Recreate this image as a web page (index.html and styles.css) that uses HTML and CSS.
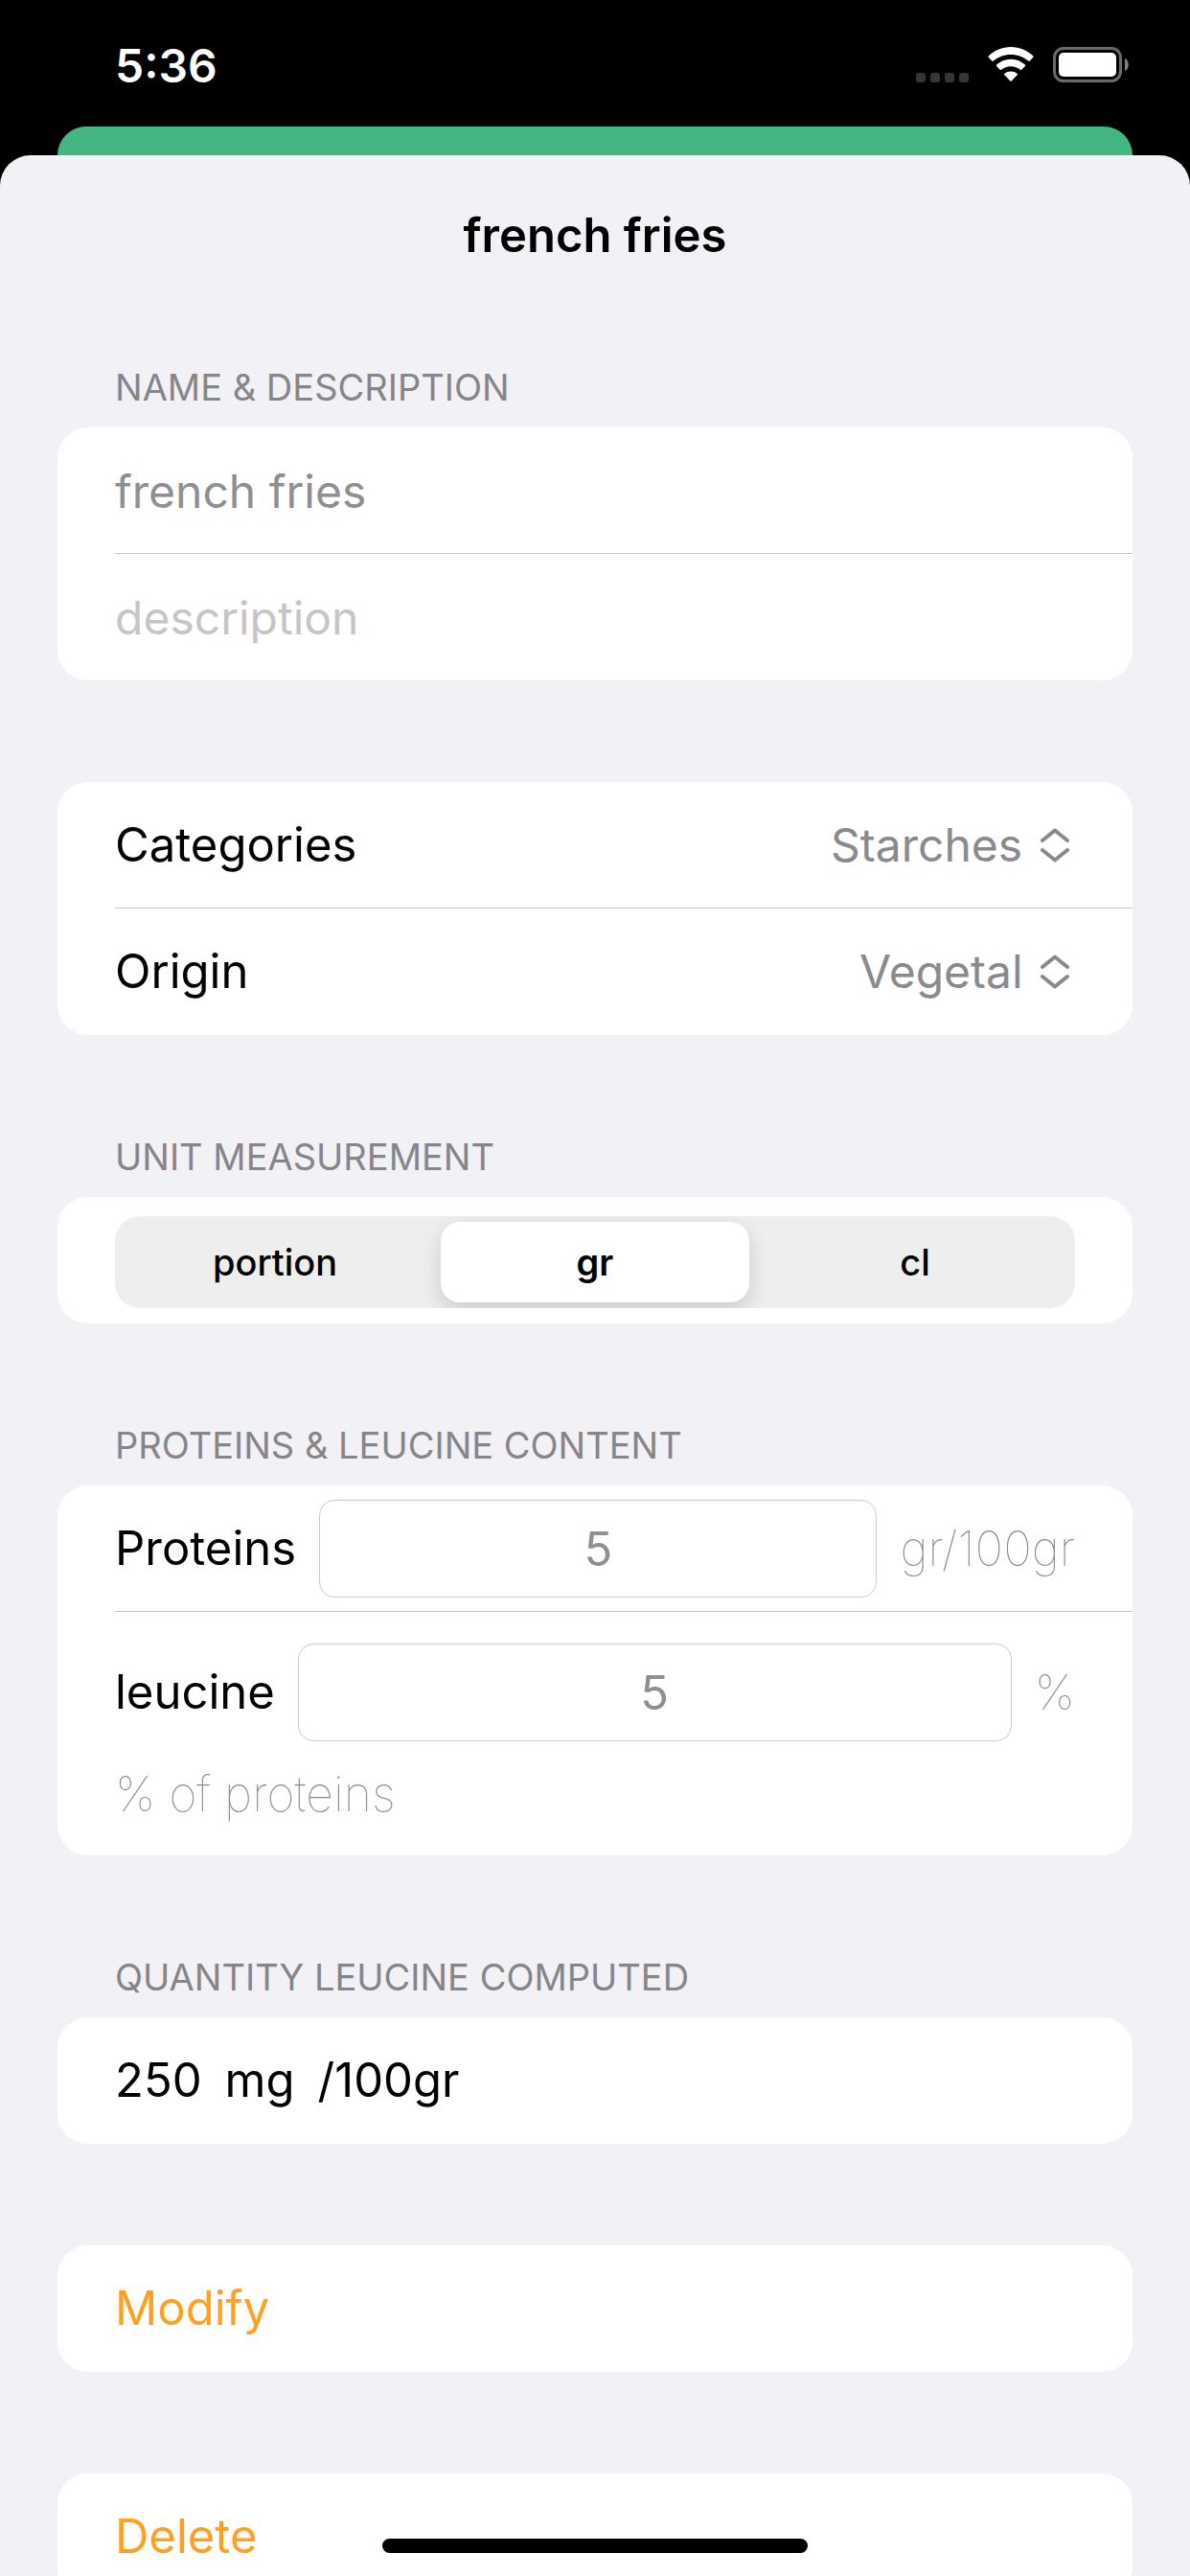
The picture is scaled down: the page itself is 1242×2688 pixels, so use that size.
FILE: index.html
```html
<!DOCTYPE html>
<html lang="en">
  <head>
    <meta charset="utf-8">
    <meta name="viewport" content="width=device-width, initial-scale=1">
    <title>french fries</title>
    <link rel="stylesheet" href="styles.css">
  </head>
  <body>
    <div class="status-bar">
      <div class="time">5:36</div>
      <div class="status-icons">
        <svg class="dots" width="55" height="10" viewBox="0 0 55 10" fill="#363636">
          <rect x="0" width="10" height="10" rx="3"/>
          <rect x="15" width="10" height="10" rx="3"/>
          <rect x="30" width="10" height="10" rx="3"/>
          <rect x="45" width="10" height="10" rx="3"/>
        </svg>
        <svg class="wifi" width="48" height="37" viewBox="0 0 48 37" fill="#fff">
          <path d="M24 0C33 0 41 3.500 47.300 9.400Q48 10.100 47.300 10.800L43.800 14.600Q43.100 15.300 42.300 14.600C37.300 10.300 31 7.900 24 7.900S10.700 10.300 5.700 14.600Q4.900 15.300 4.200 14.600L.7 10.800Q0 10.100 .7 9.400C7 3.500 15 0 24 0Z"/>
          <path d="M24 12.700C29.800 12.700 35 14.900 38.900 18.500Q39.600 19.200 38.900 19.900L35.300 23.700Q34.600 24.400 33.800 23.700C31.100 21.500 27.800 20.200 24 20.200S16.900 21.500 14.200 23.700Q13.400 24.400 12.700 23.700L9.100 19.900Q8.400 19.200 9.100 18.500C13 14.900 18.200 12.700 24 12.700Z"/>
          <path d="M24 25.400C26.500 25.400 28.700 26.200 30.500 27.700Q31.300 28.400 30.600 29.200L24.700 35.500Q24 36.200 23.300 35.500L17.400 29.200Q16.700 28.400 17.500 27.700C19.300 26.200 21.500 25.400 24 25.400Z"/>
        </svg>
        <svg class="battery" width="79" height="37" viewBox="0 0 79 37">
          <rect x="1.500" y="1.500" width="69" height="34" rx="9.500" fill="none" stroke="#6b6b6b" stroke-width="3"/>
          <rect x="6" y="6" width="60" height="25" rx="5" fill="#fff"/>
          <path d="M75 12c5 2 5 11 0 13z" fill="#808080"/>
        </svg>
      </div>
    </div>

    <div class="back-page"></div>

    <div class="sheet">
      <h1 class="title">french fries</h1>
      <form class="food-form">
        <section class="section">
          <h2 class="section-title">NAME &amp; DESCRIPTION</h2>
          <div class="card">
            <div class="row">
              <input class="text-input" type="text" aria-label="Name" value="french fries">
            </div>
            <div class="row">
              <input class="text-input" type="text" aria-label="Description" placeholder="description">
            </div>
          </div>
        </section>

        <section class="section">
          <div class="card">
            <div class="row">
              <label for="categories">Categories</label>
              <div class="picker">
                <select id="categories">
                  <option>Starches</option>
                </select>
                <svg class="chevrons" width="30" height="36" viewBox="0 0 30 36" fill="none" stroke="#8a8a8e" stroke-width="4" stroke-linecap="round" stroke-linejoin="round">
                  <path d="M2 13L15 2.500L28 13M2 23L15 33.500L28 23"/>
                </svg>
              </div>
            </div>
            <div class="row">
              <label for="origin">Origin</label>
              <div class="picker">
                <select id="origin">
                  <option>Vegetal</option>
                </select>
                <svg class="chevrons" width="30" height="36" viewBox="0 0 30 36" fill="none" stroke="#8a8a8e" stroke-width="4" stroke-linecap="round" stroke-linejoin="round">
                  <path d="M2 13L15 2.500L28 13M2 23L15 33.500L28 23"/>
                </svg>
              </div>
            </div>
          </div>
        </section>

        <section class="section">
          <h2 class="section-title">UNIT MEASUREMENT</h2>
          <div class="card">
            <div class="row">
              <div class="segments" role="radiogroup" aria-label="Unit measurement">
                <label class="segment"><input type="radio" name="unit" value="portion">portion</label>
                <label class="segment"><input type="radio" name="unit" value="gr" checked>gr</label>
                <label class="segment"><input type="radio" name="unit" value="cl">cl</label>
              </div>
            </div>
          </div>
        </section>

        <section class="section">
          <h2 class="section-title">PROTEINS &amp; LEUCINE CONTENT</h2>
          <div class="card">
            <div class="row">
              <label for="proteins">Proteins</label>
              <input class="number-input" id="proteins" type="text" inputmode="decimal" value="5">
              <span class="unit">gr/100gr</span>
            </div>
            <div class="row leucine-row">
              <div class="line">
                <label for="leucine">leucine</label>
                <input class="number-input" id="leucine" type="text" inputmode="decimal" value="5">
                <span class="unit">%</span>
              </div>
              <div class="unit">% of proteins</div>
            </div>
          </div>
        </section>

        <section class="section">
          <h2 class="section-title">QUANTITY LEUCINE COMPUTED</h2>
          <div class="card">
            <div class="row">
              <span>250</span>
              <span>mg</span>
              <span>/100gr</span>
            </div>
          </div>
        </section>

        <section class="section">
          <div class="card">
            <button class="row action" type="button">Modify</button>
          </div>
        </section>

        <section class="section">
          <div class="card">
            <button class="row action" type="button">Delete</button>
          </div>
        </section>
      </form>
    </div>

    <div class="home-indicator"></div>
  </body>
</html>
```

FILE: styles.css
```css
* {
  box-sizing: border-box;
}
body {
  margin: 0;
  height: 100vh;
  display: flex;
  flex-direction: column;
  overflow: hidden;
  background-color: #000;
  color: #000;
  font-family: Inter, "Liberation Sans", sans-serif;
  font-size: 49px;
  line-height: 62px;
}
input, select, button {
  font: inherit;
  color: inherit;
  background: none;
  border: none;
  margin: 0;
  padding: 0;
  border-radius: 0;
  outline: none;
}

/* status bar */
.status-bar {
  flex: none;
  height: 132px;
  padding: 38px 64px 0 120px;
  display: flex;
  justify-content: space-between;
  align-items: flex-start;
  color: #fff;
}
.time {
  font-size: 48px;
  font-weight: 600;
}
.status-icons {
  display: flex;
  align-items: flex-end;
  gap: 20px;
  padding-top: 11px;
}

/* sheet */
.back-page {
  flex: none;
  height: 30px;
  margin: 0 60px;
  background-color: #42b781;
  border-radius: 30px 30px 0 0;
}
.sheet {
  flex: 1;
  min-height: 0;
  overflow-y: auto;
  scrollbar-width: none;
  background-color: #f2f1f6;
  border-radius: 32px 32px 0 0;
}
.title {
  margin: 0;
  padding: 53px 60px;
  font-size: 49px;
  font-weight: 600;
  text-align: center;
}
.food-form {
  padding: 53px 60px;
  display: flex;
  flex-direction: column;
  gap: 106px;
}
.section-title {
  margin: 0;
  padding: 0 60px 20px;
  font-size: 38px;
  font-weight: 400;
  line-height: 43px;
  color: #86858a;
}

/* cards */
.card {
  background-color: #fff;
  border-radius: 32px;
}
.row {
  min-height: 132px;
  margin-left: 60px;
  padding-right: 60px;
  display: flex;
  align-items: center;
  gap: 24px;
}
.row + .row {
  min-height: 133px;
  margin-top: -1px;
  border-top: 1px solid #c6c6c8;
}
.text-input {
  flex: 1;
  min-width: 0;
  height: 66px;
  font-size: 48px;
  color: #8e8e93;
}
.text-input::placeholder {
  color: #c5c5c7;
  opacity: 1;
}
.picker {
  margin-left: auto;
  display: flex;
  align-items: center;
  gap: 18px;
  padding-right: 6px;
  font-size: 48px;
  color: #8a8a8e;
}
.picker select {
  appearance: none;
}

/* unit switch */
.segments {
  flex: 1;
  height: 96px;
  margin-top: 4px;
  padding: 6px;
  display: grid;
  grid-template-columns: repeat(3, 1fr);
  gap: 12px;
  overflow: hidden;
  background-color: #eee;
  border-radius: 26px;
}
.segment {
  display: flex;
  align-items: center;
  justify-content: center;
  font-size: 38px;
  font-weight: 500;
  border-radius: 20px;
}
.segment input {
  appearance: none;
}
.segment:has(input:checked) {
  background-color: #fff;
  font-weight: 600;
  box-shadow: 0 8px 22px rgba(0, 0, 0, 0.15);
}

/* proteins and leucine */
.number-input {
  flex: 1;
  min-width: 0;
  height: 102px;
  border: 1px solid #cbcbcd;
  border-radius: 16px;
  text-align: center;
  color: #8e8e93;
}
.unit {
  font-size: 50px;
  font-weight: 100;
  color: #8a8a8e;
}
.leucine-row {
  flex-direction: column;
  align-items: stretch;
  padding-top: 33px;
  padding-bottom: 33px;
}
.line {
  display: flex;
  align-items: center;
  gap: 24px;
}

.action {
  width: calc(100% - 60px);
  color: #ffa022;
  cursor: pointer;
}

.home-indicator {
  position: fixed;
  left: 50%;
  bottom: 24px;
  width: 444px;
  height: 15px;
  margin-left: -222px;
  background-color: #000;
  border-radius: 8px;
}
```
